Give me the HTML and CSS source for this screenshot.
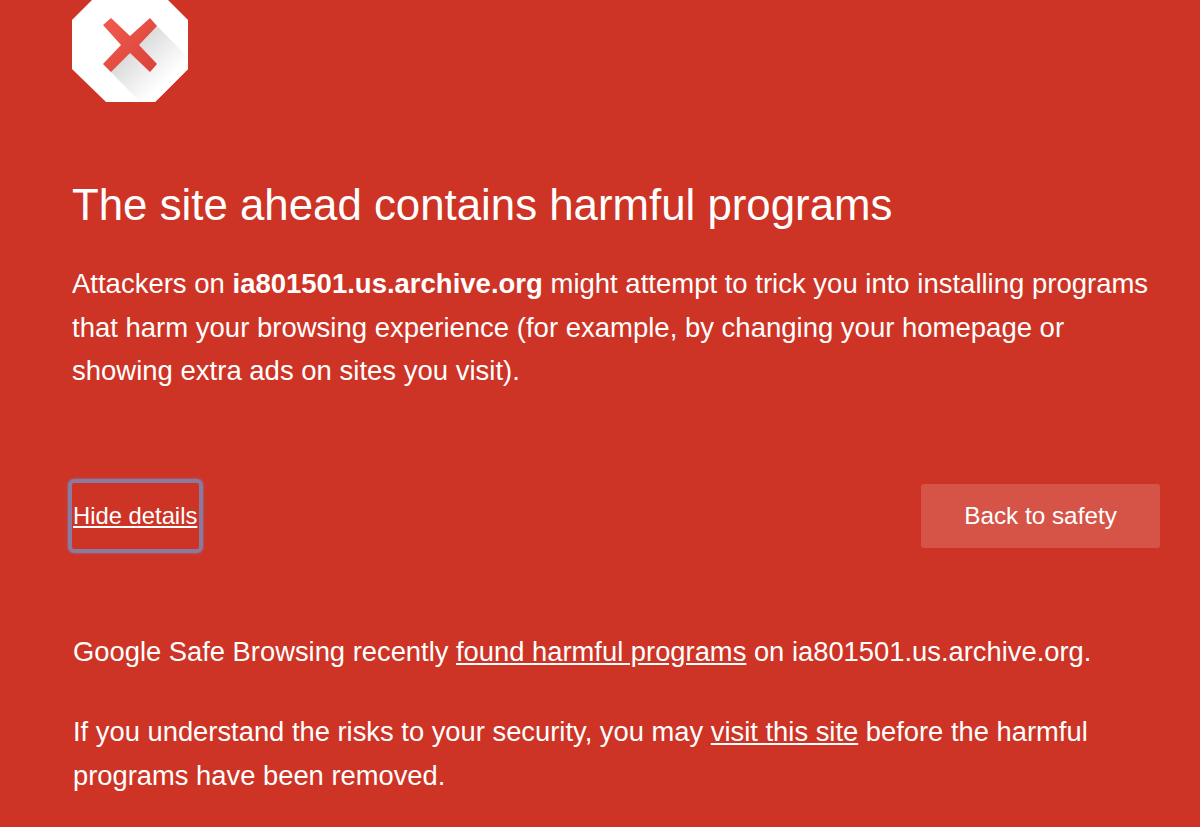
FILE: index.html
```html
<!DOCTYPE html>
<html>
<head>
    <title>Security error</title>
    <link rel="stylesheet" href="styles.css">
</head>
<body>
    <div class="page">
        <svg class="icon" width="116" height="116" viewBox="0 0 116 116">
            <defs>
                <linearGradient id="shade" gradientUnits="userSpaceOnUse" x1="62" y1="63" x2="94" y2="95">
                    <stop offset="0" stop-color="#dcdcdc"/>
                    <stop offset="1" stop-color="#ffffff"/>
                </linearGradient>
                <linearGradient id="cross" gradientUnits="userSpaceOnUse" x1="32" y1="32" x2="85" y2="86">
                    <stop offset="0" stop-color="#f25a4c"/>
                    <stop offset="1" stop-color="#d8423a"/>
                </linearGradient>
            </defs>
            <polygon points="34,0 82,0 116,34 116,83 83,116 34,116 0,83 0,34" fill="#fff"/>
            <polygon points="85,40 116,71 116,83 83,116 68,116 31,78 58,59" fill="url(#shade)"/>
            <polygon points="31,39 39,32 58,50 78,32 85,40 67,59 85,78 78,86 58,67 39,86 31,78 49,59" fill="url(#cross)"/>
        </svg>
        <h1>The site ahead contains harmful programs</h1>
        <p class="intro">Attackers on <strong>ia801501.us.archive.org</strong> might attempt to trick you into installing programs that harm your browsing experience (for example, by changing your homepage or showing extra ads on sites you visit).</p>
        <div class="actions">
            <a class="details-link" href="#">Hide details</a>
            <button class="safety-btn">Back to safety</button>
        </div>
        <p class="detail">Google Safe Browsing recently <a href="#">found harmful programs</a> on ia801501.us.archive.org.</p>
        <p class="detail">If you understand the risks to your security, you may <a href="#">visit this site</a> before the harmful programs have been removed.</p>
    </div>
</body>
</html>
```

FILE: styles.css
```css
*{padding: 0;margin: 0;box-sizing: border-box;}
html,body{height: 100%;overflow: hidden;}
body{
    background: #cd3425;
    color: #fff;
    font-family: "Liberation Sans", Arial, sans-serif;
}
.page{
    margin-top: -14px;
    padding: 0 40px 0 72px;
}
.icon{display: block;}
h1{
    margin-top: 75px;
    font-size: 43.8px;
    font-weight: normal;
    line-height: 56px;
}
.intro{
    margin-top: 29px;
    font-size: 27.5px;
    line-height: 43.5px;
}
.actions{
    margin-top: 86px;
    display: flex;
    justify-content: space-between;
    align-items: center;
}
a{color: #fff;}
.details-link{
    display: block;
    margin-left: -4px;
    padding: 0 1px;
    width: 135px;
    height: 74px;
    line-height: 66px;
    font-size: 23.8px;
    white-space: nowrap;
    border: 4px solid #8a7a9f;
    border-radius: 6px;
    box-shadow: 0 0 3px #8a7a9f;
}
.safety-btn{
    width: 239px;
    height: 64px;
    background: #d55347;
    color: #fff;
    border: none;
    border-radius: 3px;
    font-family: inherit;
    font-size: 24.3px;
}
.detail{
    padding-left: 1px;
    font-size: 27.35px;
    line-height: 44px;
}
.actions + .detail{margin-top: 77px;}
.detail + .detail{margin-top: 36px;}
```
